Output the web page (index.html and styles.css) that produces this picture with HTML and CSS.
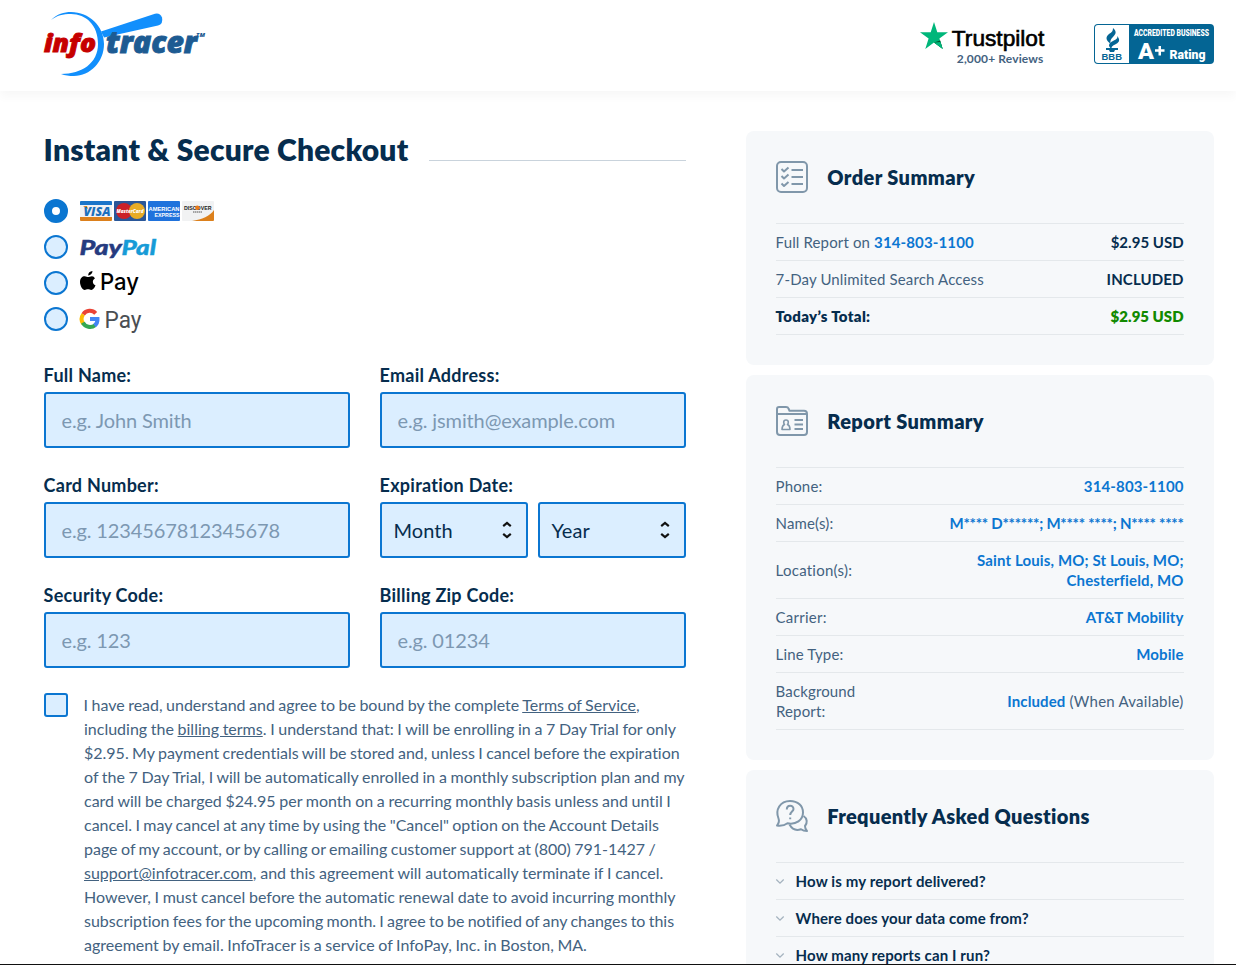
FILE: index.html
```html
<!DOCTYPE html>
<html lang="en">
<head>
<meta charset="utf-8">
<title>InfoTracer Checkout</title>
<link rel="stylesheet" href="styles.css">
</head>
<body>
<div class="page">
<header class="header">
  <svg class="logo" width="162" height="66" viewBox="0 0 162 66">
    <path d="M57 20.500L111 2.700Q116 1.500 118 6.500Q119.500 13 114 14.500L60 26.500Z" fill="#128ffc"/>
    <path d="M7 9C13 3 20 1 27 1C45 1 60 15 60 33C60 51 46 65 30 65C25 65 21 64.500 17 63C38 63 54 52 54 33C54 14 42 3 27 3C19 3 13 4.500 7 9Z" fill="#128ffc"/>
    <text class="logo-red" x="0" y="41.300" textLength="52" lengthAdjust="spacingAndGlyphs">info</text>
    <text class="logo-blue" x="62" y="41.600" textLength="91" lengthAdjust="spacingAndGlyphs">tracer</text>
    <text class="logo-tm" x="152" y="26" textLength="9" lengthAdjust="spacingAndGlyphs">TM</text>
  </svg>
  <div class="badges">
    <svg class="trustpilot" width="126" height="44" viewBox="0 0 126 44">
      <path d="M14 0L17.300 10.200H28L19.400 16.500L22.700 27L14 20.600L5.300 27L8.600 16.500L0 10.200H10.700Z" fill="#00b67a"/>
      <path d="M20.200 18.600L14 20.600L22.600 26.800Z" fill="#005128"/><path d="M14 20.600L20.500 20L22.700 27Z" fill="#00b67a"/>
      <text class="tp-name" x="31.800" y="24.400" textLength="92.500" lengthAdjust="spacingAndGlyphs">Trustpilot</text>
      <text class="tp-count" x="36.800" y="41" textLength="86.500">2,000+ Reviews</text>
    </svg>
    <svg width="120" height="40" viewBox="0 0 120 40">
      <rect width="120" height="40" rx="4" fill="#046594"/>
      <path d="M4 1H35V39H4Q1 39 1 36V4Q1 1 4 1Z" fill="#fff"/>
      <g fill="#046594"><path d="M19 4C22 7 23 9 19 13C16 16 16 18 17 20C12 17 11 13 15 10C18 8 19 7 19 4Z"/><path d="M23 12C26 15 26 18 22 20C18 22 17 23 18 25C13 22 15 19 19 17C23 15 24 14 23 12Z"/><path d="M12 24H24V26H21L20 28H16L15 26H12Z"/></g>
      <text class="bbb-small" x="7.500" y="35.800" textLength="20.500" lengthAdjust="spacingAndGlyphs">BBB</text>
      <text class="bbb-top" x="40" y="12" textLength="75" lengthAdjust="spacingAndGlyphs">ACCREDITED BUSINESS</text>
      <text class="bbb-grade" x="44" y="34.800" textLength="16" lengthAdjust="spacingAndGlyphs">A</text>
      <path d="M61 25.200H64.500V22H67V25.200H70.500V27.800H67V31.500H64.500V27.800H61Z" fill="#fff"/>
      <text class="bbb-rating" x="75.500" y="34.500" textLength="36" lengthAdjust="spacingAndGlyphs">Rating</text>
    </svg>
  </div>
</header>

<main class="main">
  <section class="checkout">
    <div class="title-row"><h1>Instant &amp; Secure Checkout</h1><span class="rule"></span></div>
    <div class="methods">
      <div class="method"><span class="radio selected"></span>
        <svg width="134" height="20" viewBox="0 0 134 20">
          <rect width="32" height="20" rx="1" fill="#f1f2f3"/><path d="M0 4V1Q0 0 1 0H31Q32 0 32 1V4Z" fill="#1b75c9"/><path d="M0 16H32V19Q32 20 31 20H1Q0 20 0 19Z" fill="#dc801c"/>
          <path d="M3 5H7L8 8Z" fill="#dc801c"/>
          <text class="visa" x="3.500" y="14.500" textLength="27" lengthAdjust="spacingAndGlyphs">VISA</text>
          <rect x="34" width="32" height="20" rx="1" fill="#2a5799"/><circle cx="44" cy="10" r="8" fill="#cb2028"/><circle cx="57" cy="10" r="8" fill="#e8ac26"/>
          <text class="master" x="36.500" y="12" textLength="27" lengthAdjust="spacingAndGlyphs">MasterCard</text>
          <rect x="68" width="32" height="20" rx="1" fill="#1f72dc"/>
          <text class="amex" x="68.500" y="9.700" textLength="31" lengthAdjust="spacingAndGlyphs">AMERICAN</text>
          <text class="amex" x="74.500" y="15.900" textLength="25" lengthAdjust="spacingAndGlyphs">EXPRESS</text>
          <rect x="102" width="32" height="20" rx="1" fill="#f1f2f3"/><path d="M134 9C130 15 122 18.500 112 20H133Q134 20 134 19Z" fill="#dc801c"/>
          <text class="discover" x="104" y="9" textLength="27.500" lengthAdjust="spacingAndGlyphs">DISCOVER</text><circle cx="117.300" cy="6.800" r="2.200" fill="#e87b1a"/>
          <path d="M113 11H122" stroke="#555" stroke-width="1" stroke-dasharray="1.500 .5"/>
        </svg></div>
      <div class="method"><span class="radio"></span>
        <svg width="78" height="24" viewBox="0 0 78 24"><text class="paypal" x="-.5" y="19.700" textLength="42.500" lengthAdjust="spacingAndGlyphs" fill="#253b80" stroke="#253b80">Pay</text><text class="paypal" x="41.500" y="19.700" textLength="34.500" lengthAdjust="spacingAndGlyphs" fill="#179bd7" stroke="#179bd7">Pal</text></svg></div>
      <div class="method"><span class="radio"></span>
        <svg width="60" height="28" viewBox="0 0 60 28"><path d="M12.500 2C12.500 4.500 10.500 6.500 8.200 6.400C8 4 10 2.200 12.500 2ZM14.900 9.500C12 11 12.300 15 15.500 16.300C14.500 19 13 21 11.300 21C10 21 9.400 20.300 8 20.300C6.500 20.300 5.800 21 4.700 21C2.500 21 0 16.800 0 13C0 9.200 2.300 7.200 4.700 7.200C6.200 7.200 7.200 8.100 8.200 8.100C9.100 8.100 10.400 7.100 12.100 7.200C13.300 7.300 14.200 7.900 14.900 9.500Z"/>
        <text class="apple-pay" x="20" y="21" textLength="39" lengthAdjust="spacingAndGlyphs">Pay</text></svg></div>
      <div class="method"><span class="radio"></span>
        <svg width="62" height="28" viewBox="0 0 62 28"><g fill="none" stroke-width="4"><path d="M3.200 9.300A8 8 0 0 1 15.700 8.400" stroke="#ea4335"/><path d="M3.200 9.300A8 8 0 0 0 3.200 18.700" stroke="#fbbc04"/><path d="M2.900 17.600A8 8 0 0 0 15.100 20.200" stroke="#34a853"/><path d="M10 14H17.500A8 8 0 0 1 14.600 20.600" stroke="#4285f4"/></g>
        <text class="google-pay" x="24.500" y="22.500" textLength="37" lengthAdjust="spacingAndGlyphs">Pay</text></svg></div>
    </div>

    <form class="form">
      <label class="field"><span>Full Name:</span><input type="text" placeholder="e.g. John Smith"></label>
      <label class="field"><span>Email Address:</span><input type="text" placeholder="e.g. jsmith@example.com"></label>
      <label class="field"><span>Card Number:</span><input type="text" placeholder="e.g. 1234567812345678"></label>
      <div class="field"><span>Expiration Date:</span>
        <div class="selects">
          <div class="select">Month<svg width="10" height="18" viewBox="0 0 10 18"><path d="M1.200 5.200L5 2L8.800 5.200M1.200 12.800L5 16L8.800 12.800"/></svg></div>
          <div class="select">Year<svg width="10" height="18" viewBox="0 0 10 18"><path d="M1.200 5.200L5 2L8.800 5.200M1.200 12.800L5 16L8.800 12.800"/></svg></div>
        </div></div>
      <label class="field"><span>Security Code:</span><input type="text" placeholder="e.g. 123"></label>
      <label class="field"><span>Billing Zip Code:</span><input type="text" placeholder="e.g. 01234"></label>
    </form>

    <div class="terms"><span class="checkbox"></span>
      <p><span class="tight">I have read, understand and agree to be bound by the complete <u>Terms of Service</u>,</span><br>including the <u>billing terms</u>. I understand that: I will be enrolling in a 7 Day Trial for only<br><span class="tight">$2.95. My payment credentials will be stored and, unless I cancel before the expiration</span><br>of the 7 Day Trial, I will be automatically enrolled in a monthly subscription plan and my<br>card will be charged $24.95 per month on a recurring monthly basis unless and until I<br><span class="tight">cancel. I may cancel at any time by using the "Cancel" option on the Account Details<br>page of my account, or by calling or emailing customer support at (800) 791-1427 /</span><br><span class="loose"><u>support@infotracer.com</u>, and this agreement will automatically terminate if I cancel.</span><br>However, I must cancel before the automatic renewal date to avoid incurring monthly<br><span class="tighter">subscription fees for the upcoming month. I agree to be notified of any changes to this</span><br>agreement by email. InfoTracer is a service of InfoPay, Inc. in Boston, MA.</p>
    </div>
  </section>

  <aside class="sidebar">
    <section class="panel">
      <div class="panel-head">
        <svg class="icon" width="32" height="32" viewBox="0 0 32 32"><rect x="1" y="1" width="30" height="30" rx="4"/><path d="M15.500 9H27M15.500 16H27M15.500 23H27"/><path d="M5.500 8L8 10.500L12.500 6.500M5.500 15L8 17.500L12.500 13.500M5.500 22.500L8 25L12.500 21"/></svg>
        <h2>Order Summary</h2></div>
      <div class="rows">
        <div class="row"><span>Full Report on <b class="link">314-803-1100</b></span><b class="dark price">$2.95 USD</b></div>
        <div class="row"><span>7-Day Unlimited Search Access</span><b class="dark">INCLUDED</b></div>
        <div class="row total"><b class="dark">Today’s Total:</b><b class="green price">$2.95 USD</b></div>
      </div>
    </section>
    <section class="panel">
      <div class="panel-head">
        <svg class="icon" width="32" height="32" viewBox="0 0 32 32"><path d="M1 9V4Q1 2 3 2H10Q12 2 12.500 3.500L13.500 5.800H28Q31 5.800 31 9V27Q31 30 28 30H4Q1 30 1 27V9H31"/><path d="M18.500 15H27M18.500 19.500H27M18.500 24H27"/><path d="M8.500 19.500Q6 20.500 6 24.500H14Q14 20.500 11.500 19.500Q12.300 18.500 12.300 17.200Q12.300 15 10 15Q7.700 15 7.700 17.200Q7.700 18.500 8.500 19.500Z" stroke-width="1.600"/></svg>
        <h2>Report Summary</h2></div>
      <div class="rows">
        <div class="row"><span>Phone:</span><b class="link">314-803-1100</b></div>
        <div class="row"><span>Name(s):</span><b class="link masked">M**** D******; M**** ****; N**** ****</b></div>
        <div class="row"><span class="wide">Location(s):</span><b class="link">Saint Louis, MO; St Louis, MO;<br>Chesterfield, MO</b></div>
        <div class="row"><span class="wide">Carrier:</span><b class="link">AT&amp;T Mobility</b></div>
        <div class="row"><span>Line Type:</span><b class="link">Mobile</b></div>
        <div class="row"><span>Background<br>Report:</span><span class="wide"><b class="link">Included</b> (When Available)</span></div>
      </div>
    </section>
    <section class="panel faq">
      <div class="panel-head">
        <svg class="icon" width="32" height="32" viewBox="0 0 32 32"><path d="M1 25.500C3 23 3.500 21 2.500 18.500C-1 10 4 1 14 1C22 1 27 6 27 12.500C27 20 20 25 11.500 23.300C8.500 25.500 5 26 1 25.500Z"/><path d="M27.500 16C31.500 18.500 31.500 23 29 26Q29 29 31 31Q27.500 31 25 29.200C20 31 16 29 13.500 24.500"/><path d="M10.800 9.500C10.800 4.500 17.500 4.500 17.500 9C17.500 11.500 14.200 11.800 14.200 15M14.200 17.500V19.300"/></svg>
        <h2>Frequently Asked Questions</h2></div>
      <div class="rows">
        <div class="row question"><svg width="8" height="5" viewBox="0 0 8 5"><path d="M.3.500L4 4.200L7.700.5"/></svg><b>How is my report delivered?</b></div>
        <div class="row question"><svg width="8" height="5" viewBox="0 0 8 5"><path d="M.3.500L4 4.200L7.700.5"/></svg><b>Where does your data come from?</b></div>
        <div class="row question"><svg width="8" height="5" viewBox="0 0 8 5"><path d="M.3.500L4 4.200L7.700.5"/></svg><b>How many reports can I run?</b></div>
      </div>
    </section>
  </aside>
</main>
</div>
</body>
</html>
```

FILE: styles.css
```css
* { box-sizing: border-box; }
body { margin: 0; background: #fff; color: #436280; font-family: Lato, "Liberation Sans", sans-serif; font-variant-ligatures: none; text-indent: -.4px; }
h1, h2, p { margin: 0; }
svg { display: block; flex: none; overflow: visible; }
.page { height: 965px; overflow: hidden; display: flex; flex-direction: column; border-bottom: 1px solid #111; }

.header { height: 91px; flex: none; padding: 11px 22px 0 44px; display: flex; justify-content: space-between; align-items: flex-start; box-shadow: 0 5px 10px rgba(0, 0, 0, .035); }
.badges { display: flex; gap: 48px; padding-top: 13px; }
.trustpilot { margin-top: -2px; }
.logo text { font-family: "Open Sans", sans-serif; font-weight: 800; font-style: italic; }
.logo-red { font-size: 25px; fill: #c60000; stroke: #c60000; stroke-width: .9px; }
.logo-blue { font-size: 29.500px; fill: #1d5b92; stroke: #1d5b92; stroke-width: .9px; }
.logo .logo-tm { font-size: 5.500px; fill: #1d5b92; }
.tp-name { font: 400 21.500px "Liberation Sans", sans-serif; fill: #000; stroke: #000; stroke-width: .6px; }
.tp-count { font: 700 12px Lato, sans-serif; fill: #436280; }
.bbb-small { font: 700 9.500px "Liberation Sans", sans-serif; fill: #046594; }
.bbb-top { font: 900 9px Roboto, sans-serif; fill: #fff; }
.bbb-grade { font: 900 21.500px Roboto, sans-serif; fill: #fff; }
.bbb-rating { font: 900 12px Roboto, sans-serif; fill: #fff; }

.main { display: flex; gap: 60px; padding: 40px 22px 0 44px; }
.checkout { width: 642px; flex: none; }
.title-row { display: flex; gap: 21px; height: 36px; align-items: center; }
h1 { font-size: 30px; line-height: 36px; font-weight: 800; letter-spacing: .22px; color: #062d4e; white-space: nowrap; }
.rule { flex: 1; height: 1px; background: #c9d3dc; margin-top: 22px; }

.methods { display: flex; flex-direction: column; gap: 12px; margin-top: 32px; }
.method { display: flex; align-items: center; gap: 12px; height: 24px; }
.method svg { text-indent: 0; }
.radio { width: 24px; height: 24px; border: 2px solid #0b76d1; border-radius: 50%; background: #dbeeff; }
.radio.selected { border-width: 8px; background: #fff; }
.visa { font: italic 800 12.500px "Open Sans", sans-serif; fill: #1b70bd; }
.master { font: italic 800 5.500px "Open Sans", sans-serif; fill: #fff; }
.amex { font: 700 6.200px "Liberation Sans", sans-serif; fill: #fff; }
.discover { font: 700 6px "Liberation Sans", sans-serif; fill: #222; }
.paypal { font: italic 900 21.500px Lato, sans-serif; stroke-width: .4px; }
.apple-pay { font: 500 23px Inter, sans-serif; fill: #000; }
.google-pay { font: 400 23px Roboto, sans-serif; fill: #4a4e53; }

.form { display: grid; grid-template-columns: 306px 306px; gap: 25px 30px; margin-top: 32px; }
.field { display: flex; flex-direction: column; gap: 5px; color: #062d4e; font-size: 18px; line-height: 24px; font-weight: 700; letter-spacing: .25px; }
.field input, .select { height: 56px; border: 2px solid #0b76d1; border-radius: 3px; background: #dbeeff; font: 400 20px Lato, sans-serif; color: #062d4e; text-indent: -.5px; }
.field input { width: 100%; padding: 0 16px; letter-spacing: -.13px; }
.field input::placeholder { color: #7d98b2; opacity: 1; }
.selects { display: flex; gap: 10px; }
.select { flex: 1; display: flex; align-items: center; justify-content: space-between; padding: 0 14px 0 12px; letter-spacing: .08px; }
.select path { fill: none; stroke: #111; stroke-width: 2.200; }

.terms { display: flex; gap: 16px; margin-top: 25px; font-size: 16px; line-height: 24px; }
.terms p { white-space: nowrap; word-spacing: -.45px; }
.terms .tight { word-spacing: -.67px; }
.terms .tighter { word-spacing: -.85px; }
.terms .loose { word-spacing: -.28px; }
.checkbox { width: 24px; height: 24px; flex: none; border: 2px solid #0b76d1; border-radius: 3px; background: #dbeeff; }
.terms p > .tight:nth-of-type(4) { word-spacing: -.6px; }

.sidebar { flex: 1; display: flex; flex-direction: column; gap: 10px; }
.panel { background: #f6f8fa; border-radius: 8px; padding: 30px; }
.panel.faq { padding-bottom: 60px; }
.panel-head { display: flex; align-items: center; gap: 19.700px; height: 32px; margin-bottom: 30px; }
h2 { font-size: 20px; line-height: 32px; font-weight: 800; letter-spacing: .38px; color: #062d4e; }
.faq h2 { letter-spacing: .33px; }
.icon { fill: none; stroke: #8097aa; stroke-width: 2; stroke-linejoin: round; }
.rows { border-top: 1px solid #e4e8eb; }
.row { display: flex; align-items: center; justify-content: space-between; padding: 8px 0; border-bottom: 1px solid #e4e8eb; font-size: 15px; line-height: 20px; letter-spacing: .14px; }
.row > :last-child { text-align: right; padding-right: .4px; }
.row b { font-weight: 700; letter-spacing: .13px; }
.row .price { letter-spacing: .02px; }
.row .wide { letter-spacing: .24px; }
.row .masked { letter-spacing: -.25px; }
.link { color: #0b76d1; }
.dark, .question { color: #062d4e; }
.row.total b { font-weight: 800; }
.row.total .dark { letter-spacing: .32px; }
.row .green { color: #128a00; }
.row.question { justify-content: flex-start; gap: 12px; }
.question path { fill: none; stroke: #a5b3bf; stroke-width: 1.300; }
```
